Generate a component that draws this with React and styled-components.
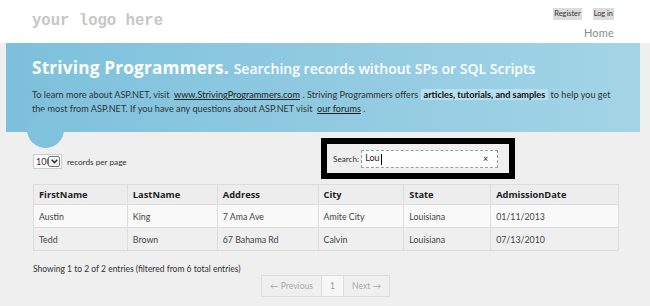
import React from "react";
import styled, { createGlobalStyle } from "styled-components";

const GlobalStyle = createGlobalStyle`
  html, body {
    margin: 0;
    padding: 0;
    background: #efefef;
  }
  body {
    width: 650px;
    height: 306px;
    overflow: hidden;
    font-family: "Lato", "Open Sans", sans-serif;
    color: #333;
  }
`;

const Header = styled.header`
  background: #fff;
  height: 43px;
  display: flex;
  justify-content: space-between;
  padding: 0 36px 0 32px;
  box-sizing: border-box;
`;

const Logo = styled.div`
  font-family: "Liberation Mono", "DejaVu Sans Mono", monospace;
  font-size: 15.6px;
  font-weight: bold;
  color: #c6c6c6;
  padding-top: 12px;
`;

const Nav = styled.div`
  display: flex;
  flex-direction: column;
  align-items: flex-end;
  padding-top: 8px;
`;

const Links = styled.div`
  display: flex;
  gap: 11px;
`;

const SmallLink = styled.span`
  background: #dcdcdc;
  font-size: 7.4px;
  color: #333;
  padding: 0 1px;
  line-height: 12px;
`;

const Home = styled.div`
  margin-top: 6px;
  font-size: 11px;
  font-weight: 400;
  color: #8c8c8c;
  line-height: 13px;
  letter-spacing: 0.2px;
`;

const Banner = styled.section`
  position: relative;
  margin: 0 10px 0 6px;
  height: 89px;
  background: linear-gradient(90deg, #7dc0dc 0%, #a3d4e6 100%);
  padding: 13px 26px 0 26px;
  box-sizing: border-box;
  &::after {
    content: "";
    position: absolute;
    left: 21px;
    bottom: -16px;
    width: 37px;
    height: 37px;
    border-radius: 50%;
    background: #80c1dc;
  }
`;

const Title = styled.h1`
  margin: 0;
  font-family: "Open Sans", sans-serif;
  color: #fff;
  font-size: 17.2px;
  font-weight: 700;
  line-height: 24px;
  letter-spacing: 0.2px;
  span {
    font-size: 14px;
    font-weight: 600;
    letter-spacing: 0;
  }
`;

const Intro = styled.p`
  margin: 7px 0 0;
  font-size: 9.15px;
  line-height: 13.5px;
  color: #333;
  a {
    color: #222;
    text-decoration: underline;
  }
  mark {
    background: #b7dfee;
    color: #111;
    font-weight: 700;
    padding: 0 3px;
  }
`;

const Content = styled.main`
  padding: 6px 31px 0 33px;
`;

const Controls = styled.div`
  display: flex;
  align-items: center;
  height: 41px;
`;

const Length = styled.label`
  display: flex;
  align-items: center;
  gap: 5px;
  font-size: 8.2px;
  color: #333;
  width: 288px;
  margin-top: 6px;
`;

const Select = styled.div`
  width: 29px;
  height: 15px;
  box-sizing: border-box;
  border: 1px solid #ccc;
  background: #fff;
  display: flex;
  align-items: center;
  font-size: 9px;
  padding-left: 2px;
  overflow: hidden;
  span {
    width: 12px;
    overflow: hidden;
    white-space: nowrap;
  }
`;

const Arrow = styled.div`
  flex: none;
  width: 12px;
  height: 11px;
  box-sizing: border-box;
  border: 1px solid #777;
  border-radius: 2px;
  background: #f4f4f4;
  display: flex;
  align-items: center;
  justify-content: center;
`;

const SearchFrame = styled.div`
  border: 6px solid #000;
  width: 194px;
  height: 41px;
  box-sizing: border-box;
  display: flex;
  align-items: center;
  padding-left: 6px;
  gap: 2px;
  font-size: 8.2px;
  color: #333;
`;

const SearchInput = styled.div`
  width: 137px;
  height: 18px;
  box-sizing: border-box;
  border: 1px dashed #8aa2c4;
  background: #fff;
  display: flex;
  align-items: center;
  justify-content: space-between;
  padding: 0 9px 0 3px;
  font-size: 9px;
  color: #222;
  i {
    display: inline-block;
    vertical-align: middle;
    border-left: 1px solid #000;
    height: 11px;
    margin-left: 1px;
  }
`;

const Table = styled.table`
  margin-top: 5px;
  width: 586px;
  border-collapse: collapse;
  font-size: 8.8px;
  color: #444;
  th, td {
    border: 1px solid #ddd;
    text-align: left;
    padding: 0 5px;
  }
  th {
    height: 19px;
    font-family: "Open Sans", sans-serif;
    font-size: 9.3px;
    font-weight: 700;
    color: #222;
    background: #ededed;
  }
  td {
    height: 22px;
  }
  tbody tr:nth-child(odd) td {
    background: #f9f9f9;
  }
  tbody tr:nth-child(even) td {
    background: #efefef;
  }
`;

const Info = styled.div`
  margin-top: 13px;
  font-size: 8.5px;
  color: #333;
`;

const Pager = styled.div`
  display: flex;
  justify-content: center;
  width: 586px;
  margin-top: 1px;
`;

const PageItem = styled.span`
  height: 22px;
  box-sizing: border-box;
  border: 1px solid #ddd;
  margin-left: -1px;
  padding: 0 8px;
  display: flex;
  align-items: center;
  font-size: 8.6px;
  color: ${(p) => (p.$active ? "#999" : "#aaa")};
  background: ${(p) => (p.$active ? "#f7f7f7" : "#efefef")};
`;

const rows = [
  ["Austin", "King", "7 Ama Ave", "Amite City", "Louisiana", "01/11/2013"],
  ["Tedd", "Brown", "67 Bahama Rd", "Calvin", "Louisiana", "07/13/2010"],
];

const columns = [
  ["FirstName", 94],
  ["LastName", 90],
  ["Address", 101],
  ["City", 86],
  ["State", 87],
  ["AdmissionDate", 128],
];

export default function App() {
  return (
    <>
      <GlobalStyle />
      <Header>
        <Logo>your logo here</Logo>
        <Nav>
          <Links>
            <SmallLink>Register</SmallLink>
            <SmallLink>Log in</SmallLink>
          </Links>
          <Home>Home</Home>
        </Nav>
      </Header>
      <Banner>
        <Title>
          Striving Programmers. <span>Searching records without SPs or SQL Scripts</span>
        </Title>
        <Intro>
          To learn more about ASP.NET, visit &nbsp;<a>www.StrivingProgrammers.com</a>&nbsp;. Striving
          Programmers offers <mark>articles, tutorials, and samples</mark> to help you get the
          most from ASP.NET. If you have any questions about ASP.NET visit &nbsp;<a>our forums</a>&nbsp;.
        </Intro>
      </Banner>
      <Content>
        <Controls>
          <Length>
            <Select>
              <span>100</span>
              <Arrow>
                <svg width="7" height="5" viewBox="0 0 7 5">
                  <path d="M0.8 0.8 L3.5 3.8 L6.2 0.8" fill="none" stroke="#222" strokeWidth="1.4" />
                </svg>
              </Arrow>
            </Select>
            records per page
          </Length>
          <SearchFrame>
            Search:
            <SearchInput>
              <span>
                Lou<i />
              </span>
              <span>×</span>
            </SearchInput>
          </SearchFrame>
        </Controls>
        <Table>
          <colgroup>
            {columns.map(([name, w]) => (
              <col key={name} style={{ width: w }} />
            ))}
          </colgroup>
          <thead>
            <tr>
              {columns.map(([name]) => (
                <th key={name}>{name}</th>
              ))}
            </tr>
          </thead>
          <tbody>
            {rows.map((r) => (
              <tr key={r[0]}>
                {r.map((c, i) => (
                  <td key={i}>{c}</td>
                ))}
              </tr>
            ))}
          </tbody>
        </Table>
        <Info>Showing 1 to 2 of 2 entries (filtered from 6 total entries)</Info>
        <Pager>
          <PageItem>← Previous</PageItem>
          <PageItem $active>1</PageItem>
          <PageItem>Next →</PageItem>
        </Pager>
      </Content>
    </>
  );
}
